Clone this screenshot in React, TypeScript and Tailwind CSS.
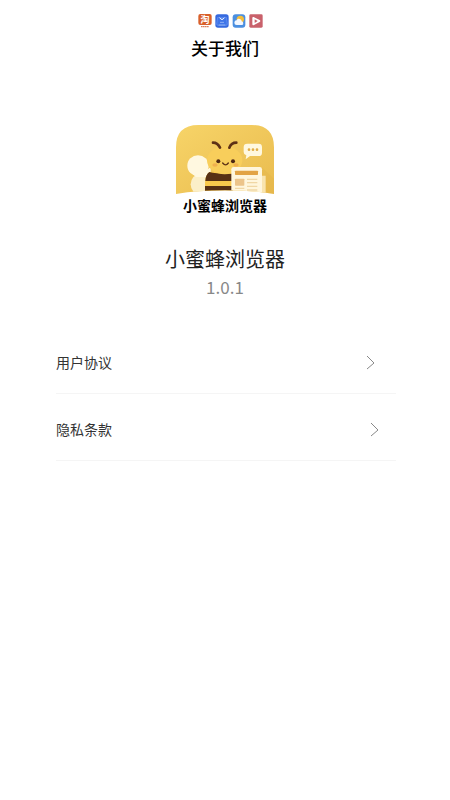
import React from 'react';

interface IRow {
  label: string;
  href: string;
  inset: string;
}

const rows: IRow[] = [
  { label: '用户协议', href: '#agreement', inset: 'pr-5' },
  { label: '隐私条款', href: '#privacy', inset: 'pr-4' },
];

const StatusIcons = () => (
  <div className="flex justify-center gap-[3px] pl-2.5" aria-hidden="true">
    <svg className="size-3.5 overflow-visible" viewBox="0 0 42 42">
      <rect x="1" y="0" width="40" height="33" rx="6" fill="#d9602b" />
      <text x="21" y="26" textAnchor="middle" fontSize="27" fontWeight="700" fill="#fff">
        淘
      </text>
      <path d="M9 38h24" stroke="#d98262" strokeWidth="4" strokeDasharray="5 1" />
    </svg>
    <svg className="size-3.5" viewBox="0 0 42 42">
      <rect x="1" y="1" width="40" height="40" rx="8" fill="#3569df" />
      <path d="M8 10h26l3 20q0 4-4 4H9q-4 0-4-4z" fill="#3f75e8" stroke="#7fa5f5" strokeWidth="1.5" />
      <path d="M14 11q7 11 14 0" fill="none" stroke="#fff" strokeWidth="3" />
      <path d="M15 25h12M11 33h20" stroke="#b9cffb" strokeWidth="2" />
    </svg>
    <svg className="size-3.5" viewBox="0 0 42 42">
      <rect x="2" y="1" width="38" height="40" rx="9" fill="#4b8fe0" />
      <circle cx="25" cy="16" r="11" fill="#f5bd39" />
      <path d="M14 33a7 7 0 0 1 0-14q4-7 11-3 4 2 4 6a6 6 0 0 1 2 11z" fill="#f4f8ff" />
    </svg>
    <svg className="size-3.5" viewBox="0 0 42 42">
      <rect x="1" y="1" width="40" height="40" rx="4" fill="#c9616b" />
      <path d="M14 9q-4-1-4 3v18q0 5 5 3l17-9q4-3 0-6z" fill="#fff" />
      <path d="M17 16v11l9-6z" fill="#c9616b" />
    </svg>
  </div>
);

const AppLogo = () => (
  <div className="flex w-[98px] flex-col items-center">
    <svg className="h-[70px] w-full" viewBox="18 15 294 210" aria-hidden="true">
      <defs>
        <linearGradient id="honey" x1="0" y1="0" x2="1" y2="1">
          <stop offset="0" stopColor="#f7d468" />
          <stop offset="1" stopColor="#e9bb4e" />
        </linearGradient>
        <clipPath id="tile">
          <path d="M18 222V82Q18 15 85 15H245Q312 15 312 82V222Q245 211 165 211T18 222z" />
        </clipPath>
      </defs>
      <g clipPath="url(#tile)">
        <rect x="18" y="15" width="294" height="210" fill="url(#honey)" />
        <path d="M275 141l37 35v49h-40z" fill="#dda83f" opacity=".2" />
        {/* wings */}
        <ellipse cx="90" cy="193" rx="28" ry="31" fill="#fbefc8" />
        <ellipse cx="84" cy="137" rx="32" ry="31" fill="#fff8e0" />
        <path d="M60 155q30 16 62-14v30H78z" fill="#fff8e0" />
        {/* body */}
        <path d="M105 225V188q0-22 13-32h72v69z" fill="#f9c94c" />
        <path d="M118 156q20 6 70 5v22h-82q1-20 12-27z" fill="#573014" />
        <path d="M105 198h83v14h-83z" fill="#573014" />
        {/* head */}
        <ellipse cx="164" cy="121" rx="53" ry="42" fill="#f8ce5b" />
        <path
          d="M129 68q14 0 21 15M178 83q6-15 21-15"
          fill="none"
          stroke="#5d3116"
          strokeWidth="8"
          strokeLinecap="round"
        />
        <circle cx="145" cy="124" r="6" fill="#4d2713" />
        <circle cx="189" cy="124" r="6" fill="#4d2713" />
        <path d="M158 129q9 11 17 0" fill="none" stroke="#5d3116" strokeWidth="4" strokeLinecap="round" />
        <ellipse cx="135" cy="135" rx="8" ry="5" fill="#f0b04e" />
        <ellipse cx="198" cy="135" rx="8" ry="5" fill="#f0b04e" />
        {/* speech bubble */}
        <path d="M232 71h34q10 0 10 10v17q0 10-10 10h-26l-13 10 2-12q-8-2-8-10V81q0-10 11-10z" fill="#fff8df" />
        <g fill="#e1ad47">
          <circle cx="237" cy="89" r="4" />
          <circle cx="249" cy="89" r="4" />
          <circle cx="261" cy="89" r="4" />
        </g>
        {/* newspaper */}
        <path d="M273 167h14v58h-14z" fill="#f9e4ae" />
        <rect x="184" y="141" width="92" height="84" rx="7" fill="#fff6dd" />
        <rect x="195" y="152" width="69" height="13" rx="2" fill="#e2a344" />
        <rect x="195" y="176" width="28" height="21" rx="2" fill="#ecc48a" />
        <path d="M231 178h31M231 188h31M231 199h31M195 205h28M231 210h31" stroke="#f0d7a5" strokeWidth="4" />
      </g>
    </svg>
    <span className="text-sm leading-5 font-bold whitespace-nowrap text-black">小蜜蜂浏览器</span>
  </div>
);

const Chevron = () => (
  <svg className="h-4 w-2.5" viewBox="0 0 10 16" fill="none" stroke="#888" aria-hidden="true">
    <path d="M1 2l7 7-7 6" />
  </svg>
);

const App = () => {
  return (
    <div className="min-h-screen bg-white font-['Noto_Sans_CJK_SC',sans-serif] text-[#222]">
      <header className="flex flex-col pt-3.5 text-center">
        <StatusIcons />
        <h1 className="mt-2 text-[17px] leading-6 font-medium text-black">关于我们</h1>
      </header>

      <main>
        <section className="flex flex-col items-center pt-[65px]">
          <AppLogo />
          <h2 className="mt-7 text-xl leading-8 font-normal">小蜜蜂浏览器</h2>
          <p className="text-[17px] leading-6 text-[#888]">1.0.1</p>
        </section>

        <nav className="mt-7 pr-[54px] pl-14">
          {rows.map((row) => (
            <a
              key={row.href}
              href={row.href}
              className={`flex h-[67px] items-center justify-between border-b border-[#f5f5f5] pt-1 text-sm text-[#333] ${row.inset}`}>
              <span>{row.label}</span>
              <Chevron />
            </a>
          ))}
        </nav>
      </main>
    </div>
  );
};

export default App;
